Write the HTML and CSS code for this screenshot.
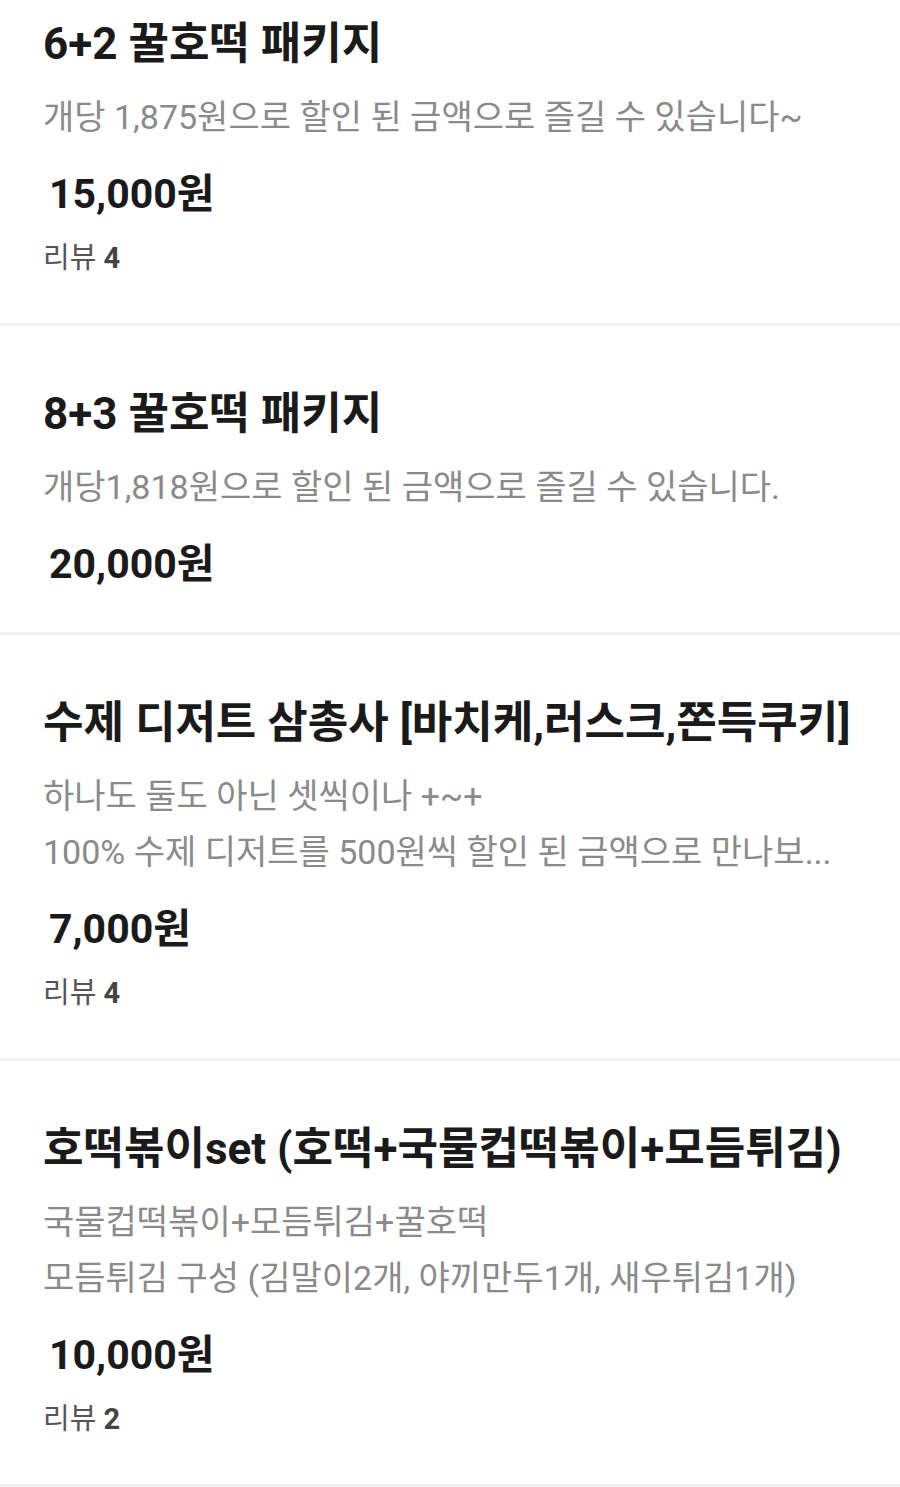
FILE: index.html
```html
<!DOCTYPE html>
<html lang="ko">
<head>
  <meta charset="UTF-8">
  <title>메뉴</title>
  <meta name="viewport" content="width=device-width, initial-scale=1.0">
  <link rel="stylesheet" href="styles.css">
</head>
<body>
  <ul class="menu-list">
    <!-- 6+2 -->
    <li class="menu-item first">
      <h3 class="menu-title">6+2 꿀호떡 패키지</h3>
      <p class="menu-desc">개당 1,875원으로 할인 된 금액으로 즐길 수 있습니다~</p>
      <div class="menu-price">15,000원</div>
      <div class="menu-review">리뷰 <b>4</b></div>
    </li>

    <!-- 8+3 -->
    <li class="menu-item">
      <h3 class="menu-title">8+3 꿀호떡 패키지</h3>
      <p class="menu-desc">개당1,818원으로 할인 된 금액으로 즐길 수 있습니다.</p>
      <div class="menu-price">20,000원</div>
    </li>

    <!-- 디저트 -->
    <li class="menu-item">
      <h3 class="menu-title">수제 디저트 삼총사 [바치케,러스크,쫀득쿠키]</h3>
      <p class="menu-desc">하나도 둘도 아닌 셋씩이나 +~+<br>100% 수제 디저트를 500원씩 할인 된 금액으로 만나보...</p>
      <div class="menu-price">7,000원</div>
      <div class="menu-review">리뷰 <b>4</b></div>
    </li>

    <!-- 호떡볶이 -->
    <li class="menu-item">
      <h3 class="menu-title">호떡볶이set (호떡+국물컵떡볶이+모듬튀김)</h3>
      <p class="menu-desc">국물컵떡볶이+모듬튀김+꿀호떡<br>모듬튀김 구성 (김말이2개, 야끼만두1개, 새우튀김1개)</p>
      <div class="menu-price">10,000원</div>
      <div class="menu-review">리뷰 <b>2</b></div>
    </li>
  </ul>
</body>
</html>
```

FILE: styles.css
```css
/* Reset */
* {
  box-sizing: border-box;
  margin: 0;
  padding: 0;
}
body {
  font-family: Roboto, "Noto Sans CJK KR", sans-serif;
  background: #fff;
  color: #1a1a1a;
}
.menu-list {
  list-style: none;
}
/* Item */
.menu-item {
  display: flex;
  flex-direction: column;
  align-items: flex-start;
  padding: 62px 43px 45px;
  border-bottom: 3px solid #f1f1f1;
}
.menu-item.first {
  margin-top: -44px;
}
.menu-title {
  font-size: 44px;
  font-weight: 700;
  line-height: 52px;
  color: #1a1a1a;
}
.menu-desc {
  margin-top: 19px;
  font-size: 34px;
  line-height: 56px;
  color: #8a8a8a;
}
.menu-price {
  margin-top: 26px;
  padding-left: 6px;
  font-size: 41px;
  font-weight: 700;
  line-height: 46px;
  color: #1a1a1a;
}
.menu-review {
  margin-top: 21px;
  font-size: 29px;
  line-height: 40px;
  color: #555;
}
.menu-review b {
  color: #444;
}
```
